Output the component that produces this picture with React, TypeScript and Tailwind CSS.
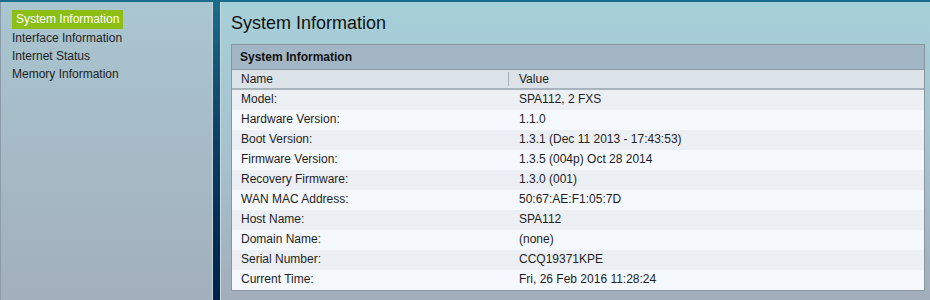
const menu = [
  "System Information",
  "Interface Information",
  "Internet Status",
  "Memory Information",
];

const rows: [string, string][] = [
  ["Model:", "SPA112, 2 FXS"],
  ["Hardware Version:", "1.1.0"],
  ["Boot Version:", "1.3.1 (Dec 11 2013 - 17:43:53)"],
  ["Firmware Version:", "1.3.5 (004p) Oct 28 2014"],
  ["Recovery Firmware:", "1.3.0 (001)"],
  ["WAN MAC Address:", "50:67:AE:F1:05:7D"],
  ["Host Name:", "SPA112"],
  ["Domain Name:", "(none)"],
  ["Serial Number:", "CCQ19371KPE"],
  ["Current Time:", "Fri, 26 Feb 2016 11:28:24"],
];

export default function App() {
  return (
    <div
      className="w-[930px] h-[300px] flex pt-[2px] bg-gradient-to-b from-[#1b6d8c] via-[#0a3c64] to-[#00224a] text-[12px] text-[#1e1e1e] overflow-hidden"
      style={{ fontFamily: '"Liberation Sans", Arial, sans-serif' }}
    >
      {/* left nav */}
      <div className="w-[213px] h-full border-l border-[#8b9ba8] border-r border-r-[#c3d2da] bg-gradient-to-b from-[#a9c6d1] to-[#a2afbc] pt-[8px] pl-[11px]">
        {menu.map((m, i) =>
          i === 0 ? (
            <div
              key={m}
              className="w-fit h-[19px] leading-[19px] px-[4px] bg-[#8dbe14] text-white"
            >
              {m}
            </div>
          ) : (
            <div key={m} className="h-[18px] leading-[18px]">
              {m}
            </div>
          )
        )}
      </div>

      {/* main */}
      <div className="ml-[7px] flex-1 h-full border-l border-[#c8d8de] bg-gradient-to-b from-[#a6d0d9] via-[#a6c2cf] to-[#a2adbb] pl-[10px] pr-[5px]">
        <h1 className="h-[40px] pt-[10px] text-[18px] leading-[22px] text-[#111]">
          System Information
        </h1>
        <div className="mt-[2px] border border-[#8896a0] bg-[#f5f8fd]">
          <div className="h-[25px] leading-[25px] pl-[8px] bg-[#a3b6c5] font-bold text-[12px] text-[#111] border-b border-[#8c9aa6]">
            System Information
          </div>
          <div className="h-[20px] flex items-center bg-[#dbe2e8] border-b-2 border-[#a8b3bc]">
            <div className="w-[276px] pl-[9px]">Name</div>
            <div className="w-px h-[14px] bg-[#a6b0ba]" />
            <div className="pl-[10px]">Value</div>
          </div>
          {rows.map(([k, v], i) => (
            <div
              key={k}
              className={`h-[20px] flex items-center pb-[3px] ${
                i % 2 === 0 ? "bg-[#eceff4]" : "bg-[#f5f8fd]"
              }`}
            >
              <div className="w-[277px] pl-[9px]">{k}</div>
              <div className="pl-[10px]">{v}</div>
            </div>
          ))}
        </div>
      </div>
    </div>
  );
}
